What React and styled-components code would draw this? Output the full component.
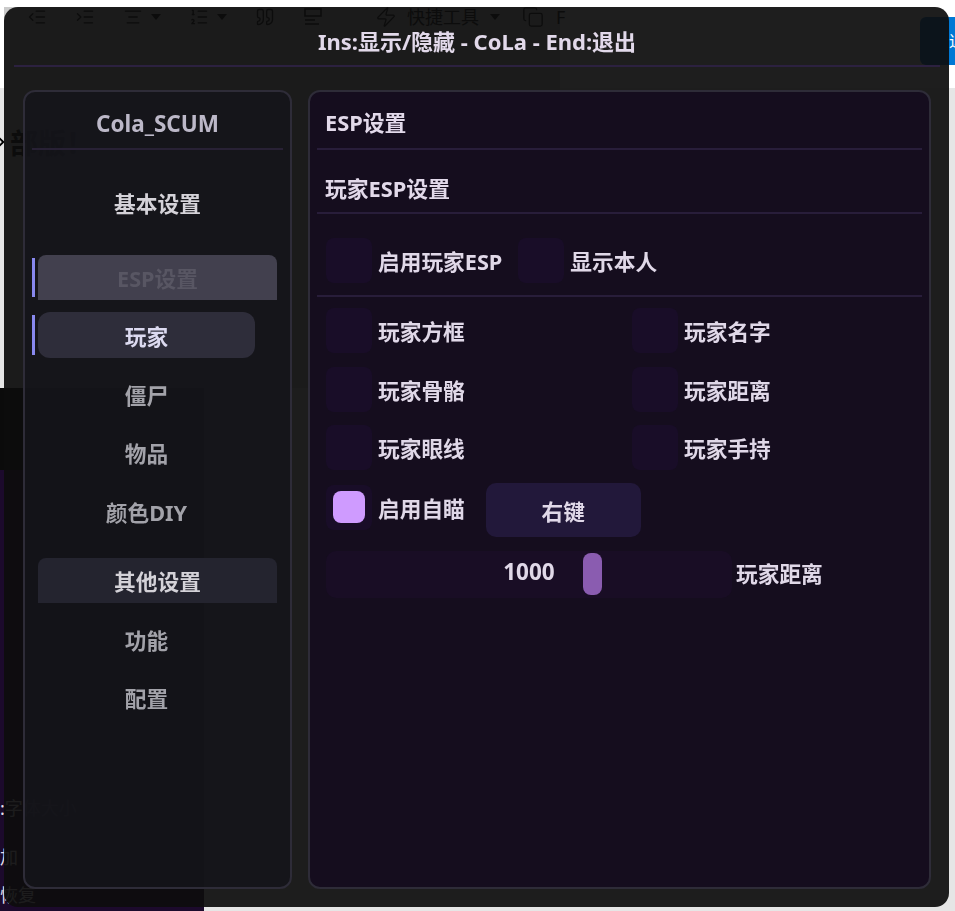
import React from 'react';
import styled, { createGlobalStyle } from 'styled-components';
import { IndentDecrease, IndentIncrease, AlignCenter, ListOrdered, Quote, Zap, Copy, ChevronRight } from 'lucide-react';

const GlobalStyle = createGlobalStyle`
  html, body { margin: 0; padding: 0; background: #f6f6f6; }
  * { box-sizing: border-box; }
`;

const App = () => {
  return (
    <Desktop>
      <GlobalStyle />
      <Sheet />
      <WhiteCard />
      <Toolbar>
        <ToolIcon $w={48}><IndentDecrease size={20} strokeWidth={1.6} /></ToolIcon>
        <ToolIcon $w={48}><IndentIncrease size={20} strokeWidth={1.6} /></ToolIcon>
        <ToolIcon $w={26}><AlignCenter size={20} strokeWidth={1.6} /></ToolIcon>
        <Caret $w={40} />
        <ToolIcon $w={26}><ListOrdered size={20} strokeWidth={1.6} /></ToolIcon>
        <Caret $w={40} />
        <ToolIcon $w={48}><Quote size={20} strokeWidth={1.6} /></ToolIcon>
        <ToolIcon $w={72}>
          <svg width="20" height="20" viewBox="0 0 20 20" fill="none" stroke="currentColor" strokeWidth="1.6">
            <rect x="2" y="2" width="16" height="7" />
            <path d="M2 13h10M2 17h14" />
          </svg>
        </ToolIcon>
        <ToolIcon $w={32}><Zap size={22} strokeWidth={1.4} /></ToolIcon>
        <ToolText $pr={9}>快捷工具</ToolText>
        <Caret $w={34} />
        <ToolIcon $w={34}><Copy size={22} strokeWidth={1.4} /></ToolIcon>
        <ToolText>F</ToolText>
      </Toolbar>
      <DocTitle><ChevronRight size={18} strokeWidth={2.5} />部版！</DocTitle>
      <BlueButton>退</BlueButton>
      <DarkApp>
        <DarkLine>:字体大小</DarkLine>
        <DarkLine $mt={21}>加</DarkLine>
        <DarkLine $mt={10}>恢复</DarkLine>
      </DarkApp>

      <Window>
        <TitleBar>Ins:显示/隐藏 - CoLa - End:退出</TitleBar>
        <Panels>
          <Sidebar>
            <SideHeader>Cola_SCUM</SideHeader>
            <SectionItem $mt={30}>基本设置</SectionItem>
            <SectionItem $mt={30} $state="open">ESP设置</SectionItem>
            <TreeItem $mt={12} $active>玩家</TreeItem>
            <TreeItem $mt={13}>僵尸</TreeItem>
            <TreeItem $mt={12}>物品</TreeItem>
            <TreeItem $mt={13}>颜色DIY</TreeItem>
            <SectionItem $mt={24} $state="hover">其他设置</SectionItem>
            <TreeItem $mt={13}>功能</TreeItem>
            <TreeItem $mt={12}>配置</TreeItem>
          </Sidebar>
          <Content>
            <ContentHeader $h={58} $pt={3}>ESP设置</ContentHeader>
            <ContentHeader $h={64} $pt={12}>玩家ESP设置</ContentHeader>
            <TopRow>
              <CheckRow>
                <CheckBox />
                <Label>启用玩家ESP</Label>
              </CheckRow>
              <CheckRow>
                <CheckBox />
                <Label>显示本人</Label>
              </CheckRow>
            </TopRow>
            <Divider />
            <OptionGrid>
              <CheckRow><CheckBox /><Label>玩家方框</Label></CheckRow>
              <CheckRow><CheckBox /><Label>玩家名字</Label></CheckRow>
              <CheckRow><CheckBox /><Label>玩家骨骼</Label></CheckRow>
              <CheckRow><CheckBox /><Label>玩家距离</Label></CheckRow>
              <CheckRow><CheckBox /><Label>玩家眼线</Label></CheckRow>
              <CheckRow><CheckBox /><Label>玩家手持</Label></CheckRow>
            </OptionGrid>
            <AimRow>
              <AimCheck>
                <CheckBox $checked />
                <Label>启用自瞄</Label>
              </AimCheck>
              <KeyButton>右键</KeyButton>
            </AimRow>
            <SliderRow>
              <SliderTrack>
                <SliderValue>1000</SliderValue>
                <SliderGrab />
              </SliderTrack>
              <SliderLabel>玩家距离</SliderLabel>
            </SliderRow>
          </Content>
        </Panels>
      </Window>
    </Desktop>
  );
};

export default App;

const font = `"Noto Sans", "Noto Sans CJK SC", sans-serif`;

const Desktop = styled.div`
  position: relative;
  width: 955px;
  height: 911px;
  overflow: hidden;
  background: linear-gradient(#ffffff 0 88px, #e6e6e6 88px);
  font-family: ${font};
`;

const Sheet = styled.div`
  position: absolute;
  left: 4px;
  top: 7px;
  width: 556px;
  height: 381px;
  background: #cbcbcb;
`;

const WhiteCard = styled.div`
  position: absolute;
  left: 560px;
  top: 0;
  right: 0;
  height: 88px;
  background: #ffffff;
  border-bottom-left-radius: 10px;
`;

const Toolbar = styled.div`
  position: absolute;
  left: 27px;
  top: 5px;
  display: flex;
  align-items: center;
  height: 24px;
  color: #000;
`;

const ToolIcon = styled.div`
  display: flex;
  width: ${(p) => p.$w}px;
`;

const ToolText = styled.span`
  font-size: 18px;
  line-height: 24px;
  white-space: nowrap;
  padding-right: ${(p) => p.$pr || 0}px;
`;

const Caret = styled.div`
  width: ${(p) => p.$w}px;
  height: 0;
  &::before {
    content: '';
    display: block;
    border-left: 5px solid transparent;
    border-right: 5px solid transparent;
    border-top: 6px solid #000;
    width: 0;
    margin-left: 2px;
    margin-top: -3px;
  }
`;

const DocTitle = styled.div`
  position: absolute;
  left: -8px;
  top: 122px;
  display: flex;
  align-items: center;
  font-size: 28px;
  font-weight: 700;
  color: #000;
`;

const BlueButton = styled.div`
  position: absolute;
  left: 920px;
  top: 17px;
  width: 35px;
  height: 48px;
  padding-left: 29px;
  border-radius: 6px 0 0 6px;
  background: #0078d4;
  color: #fff;
  font-size: 16px;
  line-height: 48px;
  white-space: nowrap;
  overflow: hidden;
`;

const DarkApp = styled.div`
  position: absolute;
  left: 0;
  top: 388px;
  width: 204px;
  bottom: 0;
  padding: 406px 0 0 0;
  display: flex;
  flex-direction: column;
  background: linear-gradient(#0b0b0b 0 82px, #1c0a2c 82px);
`;

const DarkLine = styled.div`
  margin-top: ${(p) => p.$mt || 0}px;
  font-size: 18px;
  line-height: 28px;
  color: #e8e0ee;
`;

const Window = styled.div`
  position: absolute;
  left: 4px;
  top: 7px;
  width: 945px;
  height: 900px;
  padding: 0 18px 18px 19px;
  display: flex;
  flex-direction: column;
  border-radius: 14px;
  background: rgba(13, 13, 13, 0.93);
  filter: blur(0.45px);
`;

const TitleBar = styled.div`
  flex: none;
  height: 60px;
  margin: 0 -9px;
  border-bottom: 2px solid #2c2140;
  display: flex;
  align-items: center;
  justify-content: center;
  padding-top: 8px;
  color: #e2d9ea;
  font-size: 22px;
  font-weight: 700;
`;

const Panels = styled.div`
  flex: 1;
  margin-top: 23px;
  display: flex;
  gap: 16px;
  min-height: 0;
`;

const Sidebar = styled.div`
  flex: none;
  width: 269px;
  padding: 0 13px;
  border: 2px solid #2e2c38;
  border-radius: 12px;
  background: rgba(21, 21, 27, 0.85);
`;

const SideHeader = styled.div`
  height: 58px;
  margin: 0 -6px;
  padding-top: 6px;
  border-bottom: 2px solid #282135;
  display: flex;
  align-items: center;
  justify-content: center;
  color: #bcb8c8;
  font-size: 22.5px;
  font-weight: 700;
`;

const SectionItem = styled.div`
  position: relative;
  width: 239px;
  height: 45px;
  margin-top: ${(p) => p.$mt}px;
  border-radius: 8px 8px 0 0;
  display: flex;
  align-items: center;
  justify-content: center;
  font-size: 21.7px;
  font-weight: 700;
  color: ${(p) => (p.$state === 'open' ? '#585663' : '#d4d2d8')};
  background: ${(p) => (p.$state === 'open' ? '#42404e' : p.$state === 'hover' ? '#24242f' : 'transparent')};
  ${(p) =>
    p.$state === 'open' &&
    `&::before {
      content: '';
      position: absolute;
      left: -6px;
      top: 3px;
      bottom: 3px;
      width: 3px;
      background: #8888ee;
    }`}
`;

const TreeItem = styled.div`
  position: relative;
  width: 217px;
  height: 46px;
  margin-top: ${(p) => p.$mt}px;
  border-radius: 12px;
  display: flex;
  align-items: center;
  justify-content: center;
  font-size: 21.7px;
  font-weight: 700;
  color: ${(p) => (p.$active ? '#dcdaf0' : '#a2a2a9')};
  background: ${(p) => (p.$active ? '#2e2d3a' : 'transparent')};
  ${(p) =>
    p.$active &&
    `&::before {
      content: '';
      position: absolute;
      left: -6px;
      top: 3px;
      bottom: 3px;
      width: 3px;
      background: #8888ee;
    }`}
`;

const Content = styled.div`
  flex: 1;
  padding: 0 7px;
  border: 2px solid #2e2c38;
  border-radius: 12px;
  background: #150d1e;
`;

const ContentHeader = styled.div`
  height: ${(p) => p.$h}px;
  padding: ${(p) => p.$pt}px 0 0 8px;
  border-bottom: 2px solid #281d3a;
  display: flex;
  align-items: center;
  color: #e2d9ea;
  font-size: 21.8px;
  font-weight: 700;
`;

const TopRow = styled.div`
  display: flex;
  gap: 16px;
  margin-top: 24px;
  padding-left: 9px;
`;

const Divider = styled.div`
  height: 2px;
  margin-top: 12px;
  background: #281d3a;
`;

const OptionGrid = styled.div`
  display: grid;
  grid-template-columns: 306px 1fr;
  row-gap: 13.5px;
  margin-top: 11px;
  padding-left: 9px;
`;

const CheckRow = styled.div`
  display: flex;
  align-items: center;
  gap: 6px;
`;

const AimCheck = styled(CheckRow)`
  margin-top: 2px;
`;

const CheckBox = styled.div`
  position: relative;
  flex: none;
  width: 46px;
  height: 45px;
  border-radius: 8px;
  background: #190d28;
  ${(p) =>
    p.$checked &&
    `&::after {
      content: '';
      position: absolute;
      left: 7px;
      top: 6px;
      width: 32px;
      height: 32px;
      border-radius: 8px;
      background: #cf9bff;
    }`}
`;

const Label = styled.span`
  color: #e0d8e8;
  font-size: 21.7px;
  font-weight: 700;
  white-space: nowrap;
`;

const SliderLabel = styled(Label)`
  padding-bottom: 4px;
`;

const AimRow = styled.div`
  display: flex;
  align-items: flex-start;
  gap: 21px;
  margin-top: 13px;
  padding-left: 9px;
`;

const KeyButton = styled.div`
  width: 155px;
  height: 54px;
  border-radius: 10px;
  background: #22183a;
  display: flex;
  align-items: center;
  justify-content: center;
  color: #e0d8e8;
  font-size: 21.7px;
  font-weight: 700;
`;

const SliderRow = styled.div`
  display: flex;
  align-items: center;
  gap: 4px;
  margin-top: 14px;
  padding-left: 9px;
`;

const SliderTrack = styled.div`
  position: relative;
  width: 406px;
  height: 47px;
  padding-bottom: 6px;
  border-radius: 10px;
  background: #190d25;
  display: flex;
  align-items: center;
  justify-content: center;
`;

const SliderValue = styled.span`
  color: #e0d8e8;
  font-size: 22.5px;
  font-weight: 700;
`;

const SliderGrab = styled.div`
  position: absolute;
  left: 257px;
  top: 2px;
  width: 19px;
  height: 42px;
  border-radius: 8px;
  background: #8a5cb0;
`;
